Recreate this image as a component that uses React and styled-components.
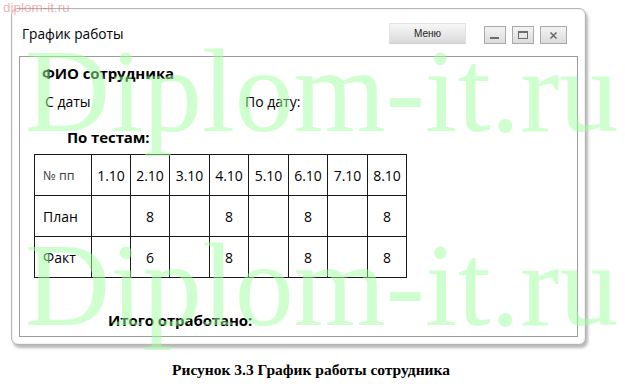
import React from "react";
import styled, { createGlobalStyle } from "styled-components";

const Global = createGlobalStyle`
  html, body { margin: 0; padding: 0; background: #fff; }
  body { font-family: "Open Sans", "Noto Sans", sans-serif; color: #000; }
`;

const Page = styled.div`
  position: relative;
  width: 625px;
  height: 387px;
  overflow: hidden;
  background: #fff;
  display: flex;
  flex-direction: column;
  padding: 8px 0 0 11px;
  box-sizing: border-box;
`;

const Window = styled.div`
  width: 575px;
  height: 337px;
  box-sizing: border-box;
  border: 1px solid #b4b4b4;
  border-radius: 7px;
  background: #fff;
  box-shadow: 2px 3px 3px rgba(0, 0, 0, 0.28), inset 0 0 0 1px #f4f4f4;
  display: flex;
  flex-direction: column;
`;

const TitleBar = styled.div`
  height: 47px;
  display: flex;
  align-items: center;
  padding: 0 18px 0 10px;
  box-sizing: border-box;
`;

const Title = styled.div`
  font-size: 13.7px;
  flex: 1;
  margin-top: 1px;
`;

const MenuButton = styled.div`
  width: 77px;
  height: 21px;
  margin-top: 2px;
  box-sizing: border-box;
  background: linear-gradient(#f7f7f7, #dadada);
  border: 1px solid #e2e2e2;
  border-bottom-color: #cfcfcf;
  display: flex;
  align-items: center;
  justify-content: center;
  font-family: "Liberation Sans", Arial, sans-serif;
  font-size: 10px;
  color: #222;
`;

const WinButtons = styled.div`
  display: flex;
  gap: 6px;
  margin-left: 18px;
  margin-top: 5px;
`;

const WinButton = styled.div`
  width: ${(p) => p.$w || 22}px;
  height: 18px;
  box-sizing: border-box;
  border: 1px solid #a9a9a9;
  background: linear-gradient(#f3f3f3, #dcdcdc);
  display: flex;
  align-items: center;
  justify-content: center;
  color: #6a6a6a;
`;

const Panel = styled.div`
  margin: 0 7px;
  height: 281px;
  box-sizing: border-box;
  border: 1px solid #9c9c9c;
  display: flex;
  flex-direction: column;
  align-items: flex-start;
  padding: 6px 0 0 14px;
`;

const Heading = styled.div`
  font-weight: 700;
  font-size: 15px;
  line-height: 20px;
  letter-spacing: -0.1px;
  margin-left: ${(p) => p.$ml || 0}px;
  margin-top: ${(p) => p.$mt || 0}px;
`;

const DateRow = styled.div`
  display: flex;
  font-size: 14px;
  line-height: 19px;
  margin: 9px 0 0 11px;
`;

const DateLabel = styled.div`
  width: ${(p) => p.$w || "auto"};
`;

const Table = styled.table`
  border-collapse: collapse;
  margin-top: 7px;
  td {
    border: 1px solid #1a1a1a;
    height: 41px;
    padding: 0;
    box-sizing: border-box;
  }
`;

const Cell = styled.td`
  width: ${(p) => p.$w}px;
  && {
    text-align: ${(p) => (p.$left ? "left" : "center")};
    padding-left: ${(p) => (p.$left ? 8 : 0)}px;
  }
  font-size: ${(p) => (p.$small ? 12.5 : 14)}px;
  color: ${(p) => (p.$muted ? "#3a3a3a" : "#000")};
`;

const Caption = styled.div`
  font-family: "Liberation Serif", "Times New Roman", serif;
  font-weight: 700;
  font-size: 15.5px;
  text-align: center;
  width: 604px;
  margin-top: 16px;
  margin-left: -2px;
`;

const Watermark = styled.div`
  position: absolute;
  left: ${(p) => p.$x}px;
  top: ${(p) => p.$y}px;
  font-family: "Liberation Serif", "Times New Roman", serif;
  font-size: 118px;
  line-height: 1;
  color: rgba(160, 255, 160, 0.5);
  white-space: nowrap;
  pointer-events: none;
`;

const SmallMark = styled.div`
  position: absolute;
  left: 3px;
  top: 0px;
  font-family: "Liberation Sans", Arial, sans-serif;
  font-size: 13.5px;
  color: rgba(220, 80, 80, 0.45);
  pointer-events: none;
`;

const widths = [57, 39, 39, 40, 39, 40, 39, 40, 39];
const header = ["№ пп", "1.10", "2.10", "3.10", "4.10", "5.10", "6.10", "7.10", "8.10"];
const plan = ["План", "", "8", "", "8", "", "8", "", "8"];
const fact = ["Факт", "", "6", "", "8", "", "8", "", "8"];

function Row({ cells }) {
  return (
    <tr>
      {cells.map((c, i) => (
        <Cell key={i} $w={widths[i]} $left={i === 0} $small={c === "№ пп"} $muted={c === "№ пп"}>
          {c}
        </Cell>
      ))}
    </tr>
  );
}

export default function App() {
  return (
    <>
      <Global />
      <Page>
        <Window>
          <TitleBar>
            <Title>График работы</Title>
            <MenuButton>Меню</MenuButton>
            <WinButtons>
              <WinButton>
                <svg width="10" height="10" viewBox="0 0 10 10">
                  <rect x="0" y="7" width="9" height="2" fill="#6b6b6b" />
                </svg>
              </WinButton>
              <WinButton>
                <svg width="10" height="10" viewBox="0 0 10 10">
                  <rect x="0.5" y="1.5" width="9" height="7" fill="none" stroke="#6b6b6b" />
                  <rect x="0" y="1" width="10" height="2" fill="#6b6b6b" />
                </svg>
              </WinButton>
              <WinButton $w={27}>
                <svg width="9" height="9" viewBox="0 0 9 9">
                  <path d="M1.5 1.5 L7.5 7.5 M7.5 1.5 L1.5 7.5" stroke="#6b6b6b" strokeWidth="1.6" />
                </svg>
              </WinButton>
            </WinButtons>
          </TitleBar>
          <Panel>
            <Heading $ml={8}>ФИО сотрудника</Heading>
            <DateRow>
              <DateLabel $w="200px">С даты</DateLabel>
              <DateLabel>По дату:</DateLabel>
            </DateRow>
            <Heading $ml={33} $mt={16}>По тестам:</Heading>
            <Table>
              <tbody>
                <Row cells={header} />
                <Row cells={plan} />
                <Row cells={fact} />
              </tbody>
            </Table>
            <Heading $ml={74} $mt={32}>Итого отработано:</Heading>
          </Panel>
        </Window>
        <Caption>Рисунок 3.3 График работы сотрудника</Caption>
        <SmallMark>diplom-it.ru</SmallMark>
        <Watermark $x={25} $y={33}>Diplom-it.ru</Watermark>
        <Watermark $x={25} $y={227}>Diplom-it.ru</Watermark>
      </Page>
    </>
  );
}
